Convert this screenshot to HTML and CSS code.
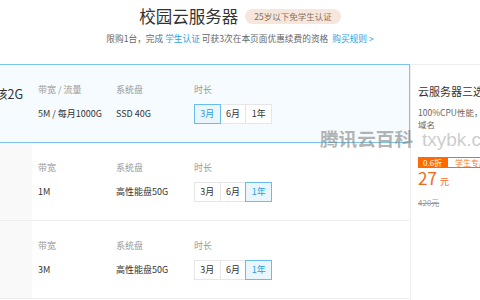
FILE: index.html
```html
<!DOCTYPE html>
<html>
<head>
    <title>校园云服务器</title>
    <meta name="viewport" content="width=device-width, initial-scale=1.0">
    <link rel="stylesheet" href="styles.css">
</head>
<body>
    <header class="head">
        <div class="title-line">
            <h1>校园云服务器</h1>
            <span class="badge">25岁以下免学生认证</span>
        </div>
        <p class="sub">限购1台，完成 <a href="#">学生认证</a> 可获3次在本页面优惠续费的资格&nbsp;&nbsp;<a href="#">购买规则 &gt;</a></p>
    </header>

    <div class="main">
        <div class="list">
            <div class="row active">
                <div class="name">1核2G</div>
                <div class="spec">
                    <p class="label">带宽 / 流量</p>
                    <p class="value">5M / 每月1000G</p>
                </div>
                <div class="spec">
                    <p class="label">系统盘</p>
                    <p class="value">SSD 40G</p>
                </div>
                <div class="spec">
                    <p class="label">时长</p>
                    <div class="dur">
                        <span class="on">3月</span><span>6月</span><span>1年</span>
                    </div>
                </div>
            </div>

            <div class="row">
                <div class="name"></div>
                <div class="spec">
                    <p class="label">带宽</p>
                    <p class="value">1M</p>
                </div>
                <div class="spec">
                    <p class="label">系统盘</p>
                    <p class="value">高性能盘50G</p>
                </div>
                <div class="spec">
                    <p class="label">时长</p>
                    <div class="dur">
                        <span>3月</span><span>6月</span><span class="on">1年</span>
                    </div>
                </div>
            </div>

            <div class="row">
                <div class="name"></div>
                <div class="spec">
                    <p class="label">带宽</p>
                    <p class="value">3M</p>
                </div>
                <div class="spec">
                    <p class="label">系统盘</p>
                    <p class="value">高性能盘50G</p>
                </div>
                <div class="spec">
                    <p class="label">时长</p>
                    <div class="dur">
                        <span>3月</span><span>6月</span><span class="on">1年</span>
                    </div>
                </div>
            </div>
        </div>

        <div class="side">
            <h3>云服务器三选一</h3>
            <p class="desc">100%CPU性能，可选云数据库或<br>域名</p>
            <div class="tags"><span class="off">0.6折</span><span class="only">学生专属</span></div>
            <p class="price">27<small>元</small></p>
            <p class="old">420元</p>
        </div>

        <div class="mark">腾讯云百科<span>txybk.com</span></div>
    </div>
</body>
</html>
```

FILE: styles.css
```css
body{
  margin:0;
  width:480px;
  height:300px;
  overflow:hidden;
  background:#fff;
  font-family:"Noto Sans CJK SC", "Liberation Sans", sans-serif;
  color:#333;
}
p{
  margin:0;
}
a{
  color:#2f9de3;
  text-decoration:none;
}
.head{
  text-align:center;
  padding-top:5px;
}
.title-line{
  display:flex;
  justify-content:center;
  align-items:center;
  gap:7px;
  height:22px;
}
h1{
  margin:0;
  font-size:16.5px;
  font-weight:400;
  line-height:22px;
  color:#333;
}
.badge{
  height:15px;
  line-height:15px;
  padding:0 9px;
  border-radius:8px;
  background:#f7e6dc;
  color:#85705f;
  font-size:8.5px;
}
.sub{
  margin-top:6px;
  font-size:8.7px;
  line-height:12px;
  color:#666;
}

.main{
  position:relative;
  display:flex;
  margin-top:19px;
}
.list{
  flex:none;
  width:490px;
  margin-left:-80px;
}
.row{
  display:flex;
  box-sizing:border-box;
  height:79px;
  border:1px solid transparent;
  border-bottom-color:#eee;
  margin-top:-1px;
}
.row:first-child{
  margin-top:0;
}
.row.active{
  background:#f5fbfe;
  border-color:#7cc4ec;
  position:relative;
}
.name{
  width:111px;
  padding:21px 0 0 67px;
  box-sizing:border-box;
  background:#f9f9f9;
  font-size:12.5px;
  line-height:16px;
  white-space:nowrap;
}
.active .name{
  background:none;
}
.spec{
  width:78px;
  padding-top:18px;
}
.spec:nth-child(2){
  margin-left:6px;
}
.label{
  font-size:9px;
  line-height:13px;
  color:#999;
}
.value{
  margin-top:8px;
  font-size:9px;
  line-height:20px;
  color:#333;
}
.dur{
  display:flex;
  margin-top:8px;
}
.dur span{
  width:30px;
  height:20px;
  box-sizing:border-box;
  border:1px solid #e6e6e6;
  margin-left:-1px;
  background:#fff;
  text-align:center;
  font-size:9px;
  line-height:18px;
  color:#333;
}
.dur span:first-child{
  margin-left:0;
}
.dur .on{
  position:relative;
  border-color:#69bdea;
  background:#eaf6fd;
  color:#2a9ee2;
}

.side{
  flex:none;
  width:140px;
  height:240px;
  box-sizing:border-box;
  padding:18px 0 0 7px;
  border-left:1px solid #eee;
  border-top:1px solid #eee;
  background:#fff;
}
h3{
  margin:0;
  font-size:11px;
  font-weight:400;
  line-height:16px;
  white-space:nowrap;
  color:#333;
}
.desc{
  margin-top:7px;
  font-size:8.5px;
  line-height:12px;
  color:#666;
  white-space:nowrap;
}
.tags{
  display:flex;
  margin-top:27px;
  font-size:8px;
  line-height:9px;
}
.tags span{
  border:1px solid #ff6a00;
  padding:0 4px;
}
.tags .off{
  background:#ff6a00;
  color:#fff;
}
.tags .only{
  color:#ff7d33;
  padding:0 7px;
}
.price{
  margin-top:1px;
  font-size:17px;
  line-height:18px;
  color:#f06a1e;
}
.price small{
  font-size:9px;
  margin-left:3px;
}
.old{
  margin-top:6px;
  font-size:8px;
  line-height:12px;
  color:#999;
  text-decoration:line-through;
}

.mark{
  position:absolute;
  left:320px;
  top:62px;
  font-size:18.6px;
  font-weight:700;
  line-height:24px;
  color:rgba(130,130,130,0.6);
  white-space:nowrap;
}
.mark span{
  margin-left:9px;
  font-family:"Liberation Sans", sans-serif;
  font-weight:400;
  font-size:19px;
  color:rgba(170,170,170,0.6);
}
```
